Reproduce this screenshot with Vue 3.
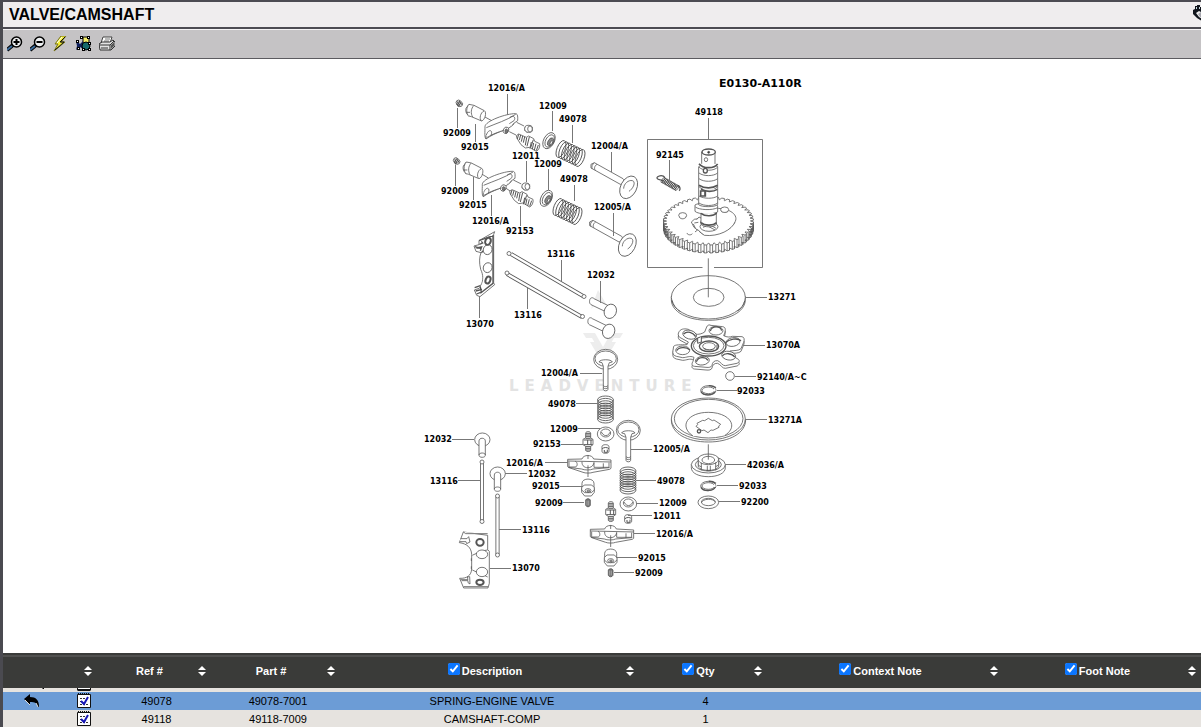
<script setup>
import { ref } from 'vue'

const tools = ['Zoom in', 'Zoom out', 'Hotspots', 'Fit image', 'Print']

const columns = ref([
  { key: 'ref', label: 'Ref #' },
  { key: 'part', label: 'Part #' },
  { key: 'description', label: 'Description', toggle: true, shown: true },
  { key: 'qty', label: 'Qty', toggle: true, shown: true },
  { key: 'context', label: 'Context Note', toggle: true, shown: true },
  { key: 'foot', label: 'Foot Note', toggle: true, shown: true },
])

const rows = [
  { ref: '49078', part: '49078-7001', description: 'SPRING-ENGINE VALVE', qty: '4', context: '', foot: '', selected: true },
  { ref: '49118', part: '49118-7009', description: 'CAMSHAFT-COMP', qty: '1', context: '', foot: '', selected: false },
]

const labels = [
  [488, 88, '12016/A'], [539, 106, '12009'], [559, 119, '49078'], [443, 133, '92009'],
  [461, 147, '92015'], [512, 156, '12011'], [534, 164, '12009'], [560, 179, '49078'],
  [591, 146, '12004/A'], [441, 191, '92009'], [459, 205, '92015'], [594, 207, '12005/A'],
  [472, 221, '12016/A'], [506, 231, '92153'], [547, 254, '13116'], [587, 275, '12032'],
  [514, 315, '13116'], [466, 324, '13070'], [695, 112, '49118'], [656, 155, '92145'],
  [768, 297, '13271'], [766, 345, '13070A'], [757, 377, '92140/A~C'], [737, 391, '92033'],
  [768, 420, '13271A'], [747, 465, '42036/A'], [739, 486, '92033'], [741, 502, '92200'],
  [541, 373, '12004/A'], [548, 404, '49078'], [550, 429, '12009'], [533, 444, '92153'],
  [506, 463, '12016/A'], [424, 439, '12032'], [430, 481, '13116'], [528, 474, '12032'],
  [532, 486, '92015'], [535, 503, '92009'], [522, 530, '13116'], [512, 568, '13070'],
  [653, 449, '12005/A'], [657, 481, '49078'], [659, 503, '12009'], [653, 516, '12011'],
  [656, 534, '12016/A'], [638, 558, '92015'], [635, 573, '92009'],
]

const leaders = [
  'M507.500 94V115', 'M552.500 111V131', 'M572.500 125V143', 'M457.500 108V128', 'M475.500 124V142', 'M526.500 161V182',
  'M548.500 169V190', 'M574.500 185V201', 'M611.500 152V172', 'M455.500 165V186', 'M473.500 177V200', 'M613.500 213V236',
  'M491.500 195V216', 'M520.500 206V226', 'M561.500 260V281', 'M600.500 281V303', 'M527.500 287V309',
  'M479.500 296V318', 'M708.500 118V139', 'M669.500 160V181', 'M745 297.500H767', 'M743 345.500H765',
  'M735 376.500H756', 'M717 390.500H737', 'M745 419.500H767', 'M725 464.500H746', 'M717 485.500H738',
  'M719 501.500H740', 'M580 373.500H602', 'M576 403.500H598', 'M578 428.500H600', 'M561 444.500H583',
  'M545 462.500H568', 'M452 439.500H474', 'M458 480.500H480', 'M505 473.500H527', 'M560 486.500H583',
  'M563 502.500H584', 'M499 529.500H521', 'M490 568.500H511', 'M631 449.500H652', 'M636 480.500H656',
  'M636 503.500H658', 'M628 515.500H652', 'M634 533.500H655', 'M616 557.500H637', 'M614 572.500H634',
].join('')

const lerp = (a, b, t) => a + (b - a) * t

function coils(x1, y1, x2, y2, n, rx, ry, angle) {
  return Array.from({ length: n }, (_, i) => ({
    x: lerp(x1, x2, i / (n - 1)),
    y: lerp(y1, y2, i / (n - 1)),
    rx, ry, angle,
  }))
}

const springs = [
  coils(561, 149, 580, 158, 8, 4, 9, 22),
  coils(558, 207, 577, 216, 8, 4, 9, 22),
  coils(605.5, 419, 605.5, 400, 9, 8, 4, 0),
  coils(628, 490, 628, 471, 9, 8, 4, 0),
  coils(663, 180, 677, 188, 11, 1, 3, 35),
]

const TEETH = 48
function rim(dy) {
  const points = []
  for (let i = 0; i < TEETH; i++) {
    for (const [offset, outer] of [[0, false], [0.3, true], [0.75, true], [0.95, false]]) {
      const a = ((i + offset) / TEETH) * Math.PI * 2
      const rx = outer ? 45 : 42
      const ry = outer ? 24 : 22
      points.push(`${(708.5 + rx * Math.cos(a)).toFixed(1)},${(221 + dy + ry * Math.sin(a)).toFixed(1)}`)
    }
  }
  return points
}
const gearTop = rim(0)
const gearBase = rim(8)
const gearSides = gearTop
  .map((p, i) => (i < TEETH * 2 + 4 && i % 4 !== 0 && i % 4 !== 3 ? `M${p}L${gearBase[i]}` : ''))
  .join('')
</script>

<template>
  <div class="viewer">
    <header class="title-bar">
      <h1>VALVE/CAMSHAFT</h1>
      <button class="hand" type="button" aria-label="Pan">
        <svg viewBox="0 0 16 18" width="16" height="18">
          <path d="M2 2h2V1h3v2h3v3l5 3v8H9L4 14 0 10V6l2-1z" fill="#10151c" />
          <path d="M3 9l3-2 4 2 6 1v6h-5L6 13z" fill="#eee" />
          <path d="M5 10l3-2 5 3v4l-6-2z" fill="#a6a6ad" />
          <path d="M3 3h1v2H3zM6 3h1v2H6z" fill="#c6d6de" />
        </svg>
      </button>
    </header>

    <nav class="toolbar" aria-label="Drawing tools">
      <button v-for="(tool, i) in tools" :key="tool" type="button" :aria-label="tool">
        <svg viewBox="0 0 16 16" width="16" height="16">
          <template v-if="i < 2">
            <path d="M0 14l6-5" stroke="#000" stroke-width="4" />
            <path d="M0 14l5-4" stroke="#3c6c9c" stroke-width="2" />
            <circle cx="9.500" cy="6" r="5" fill="#eef0f2" stroke="#000" stroke-width="1.500" />
            <path d="M6.500 6h6" stroke="#000" stroke-width="2" />
            <path v-if="i === 0" d="M9.500 3v6" stroke="#000" stroke-width="2" />
          </template>
          <template v-else-if="i === 2">
            <path d="M8 0h5L8 6h4L1 15l4-7H2z" fill="#f5ef35" stroke="#77731a" />
            <path d="M12 1L7 6h4L2 14" fill="none" stroke="#111" />
            <path d="M9 1L4 7" stroke="#fff" />
          </template>
          <template v-else-if="i === 3">
            <path d="M7 1h6v8H7z" fill="#f4ee68" stroke="#000" />
            <path d="M0 5l4 3 3-3v8l-3-2-4 3 1-4z" fill="#10205c" />
            <circle cx="10" cy="10" r="4" fill="#17696b" stroke="#000" />
            <path
              d="M4 0h3v3H4zM11 0h3v3h-3zM0 4h3v3H0zM12 6h3v3h-3zM1 11h3v3H1zM6 12h3v3H6zM12 12h3v3h-3z"
              fill="#000"
            />
            <path d="M5 1h1v1H5zM12 1h1v1h-1zM1 5h1v1H1zM13 7h1v1h-1zM2 12h1v1H2zM7 13h1v1H7zM13 13h1v1h-1z" fill="#fff" />
          </template>
          <template v-else>
            <path d="M4 1h9l-2 6H2z" fill="#fff" stroke="#444" />
            <path d="M6 3h5M5 5h5" stroke="#777" />
            <path d="M0 8l3-2h8l3-2 2 2v4l-4 4H1z" fill="#e4e4e4" stroke="#333" />
            <path d="M0 9h11l4-4M11 9v5M2 12h7" fill="none" stroke="#333" />
            <path d="M12 9l3-3v4l-3 3z" fill="#555" />
          </template>
        </svg>
      </button>
    </nav>

    <main class="stage">
      <svg class="drawing" viewBox="382 66 440 580" width="440" height="580" role="img" aria-label="Valve and camshaft parts diagram">
        <defs>
          <g id="nut">
            <path d="M108 100l9-12 15 3 31 16c8 5 2 28-8 31l-31-13c-12-2-19-13-16-25z" />
            <path d="M117 88c-9 10-9 27 0 37M132 91c-10 10-10 25-4 35M155 138c-9-7-3-26 7-30M109 112h11" />
          </g>
          <g id="rocker">
            <path d="M165 155c0-17 66-40 91-39 6 0 8 4 7 21l-13 9c-14 19-52 24-82 46-5-5-3-20-3-37z" />
            <path d="M169 158c30-13 62-22 88-40M169 180c7-20 21-15 14 1l-13 7M239 128c10-9 20-1 13 9l-14 9M183 181c23-13 51-14 70-35M168 192v-11" />
            <ellipse cx="228" cy="166" rx="8" ry="10" transform="rotate(25 228 166)" />
            <ellipse cx="229" cy="168" rx="4" ry="6" fill="#777" />
          </g>
          <g id="stud">
            <path d="M259 182l7-5 23 10 7-4 15 8 3 8 15 7c2 9-3 20-10 23l-20-12-13 2-13-10-12-19z" />
            <path d="M266 178l-4 14M272 180l-4 15M278 183l-4 17M284 186l-4 17M290 188l-4 23M298 186l-7 28M310 194l-8 24M304 201l-4 20M311 204l-4 19M318 206l-5 20M325 210l-6 17" stroke-width="3" />
          </g>
          <g id="collet">
            <path d="M286 154c3-5 19-4 21 2v12c-5 7-18 6-23-2z" />
            <ellipse cx="300" cy="162" rx="7" ry="9" /><path d="M286 155c-6 8 2 16 8 17" />
          </g>
          <g id="retainer">
            <ellipse cx="357" cy="197" rx="16" ry="26" transform="rotate(28 357 197)" />
            <ellipse cx="359" cy="198" rx="12" ry="20" transform="rotate(28 359 198)" />
            <ellipse cx="362" cy="201" rx="8" ry="13" fill="#8a8a8a" transform="rotate(28 362 201)" />
            <ellipse cx="364" cy="203" rx="3" ry="7" transform="rotate(28 364 203)" />
          </g>
          <g id="angled-valve">
            <path d="M483 268l10-5 86 48c6 5 0 17-8 17l-88-49z" />
            <path d="M493 264c-7 4-9 11-6 18M501 268c-8 5-9 13-5 18" />
            <ellipse cx="596" cy="337" rx="24" ry="36" transform="rotate(27 596 337)" />
            <path d="M581 341c0-15 15-27 26-24 12 3 3 24-10 32" />
          </g>
          <g id="upright-valve">
            <ellipse cx="257" cy="58" rx="36" ry="30" />
            <ellipse cx="257" cy="56" rx="32" ry="23" />
            <path d="M237 66l9 2 4 11v69c0 6 14 6 14 0V79l4-11 9-2c-2-9-38-9-40 0zM250 137c4 4 10 4 14 0M250 143c4 4 10 4 14 0" />
          </g>
          <g id="upright-tappet">
            <ellipse cx="202" cy="299" rx="23" ry="20" />
            <path d="M192 346v-43c0-11 19-11 19 0v43c0 8-19 8-19 0zM192 345c0-8 19-8 19 0" />
          </g>
          <g id="upright-retainer">
            <ellipse cx="257" cy="282" rx="25" ry="21" /><ellipse cx="257" cy="279" rx="15" ry="12" />
            <path d="M244 276l5 7c4 5 13 5 17 0l5-7" />
          </g>
          <g id="upright-stud">
            <path d="M197 280c0-7 15-7 15 0v14l7 4v16l-7 5v12c0 5-15 5-15 0v-12l-8-5v-16l8-4z" />
            <path d="M197 280h15M197 285h15M197 290h15M197 295h15M191 300h27M191 314h27M197 320h15M197 325h15M197 330h15M203 300v14M213 300v14" stroke-width="3" />
          </g>
          <g id="upright-collet">
            <path d="M246 320c0-8 21-8 21 0v14c0 8-21 8-21 0z" />
            <path d="M246 327c5-6 17-6 21 0M253 330v7h9v-8" stroke-width="3" />
          </g>
          <g id="upright-rocker">
            <path d="M143 358l43-1c4-14 31-14 35 0l52 3v25l-4 3-50 9c-6 3-24 3-30 0l-42-14-4-3z" />
            <path d="M143 363l130 3M147 365v16h18c9 0 8-15 1-17M186 365c-2 24 34 24 36 2M222 368v14h45v-14M145 382l40 5c8 4 27 4 34 0l50-4M250 370v14" />
            <path d="M204 345v12M204 376v35" />
          </g>
          <g id="upright-nut">
            <path d="M186 452V430c0-17 36-17 36 0v23z" />
            <path d="M185 443l8-8h22l8 8v14l-9 11h-20l-9-11z" />
            <path d="M185 450l9 8h20l9-8" />
            <ellipse cx="204" cy="452" rx="9" ry="6" />
            <ellipse cx="205" cy="453" rx="4" ry="3" fill="#bbb" />
          </g>
          <g id="upright-plug">
            <path d="M197 480c2-5 12-5 14 0v16c-3 6-11 6-14 0z" fill="#777" />
            <path d="M201 482v14M206 482v14" stroke="#fff" stroke-width="1" />
          </g>
        </defs>

        <g class="watermark">
          <path d="M591 309l7-19 11 19-11-7z" />
          <path d="M583 333h12l8 14 8-14h12l-3 5h-6l-11 19-11-19h-6z" />
          <path d="M590 342h5l8 13 8-13h5l-13 22z" />
          <text x="509" y="391">LEADVENTURE</text>
        </g>

        <!-- upper valve train -->
        <g class="ink fine" transform="translate(430 75) scale(.3333)">
          <path d="M163 125l22 12M238 170l20 10M260 142l22 11M155 297l20 12M228 340l14 9M250 315l24 12" />
          <g v-for="(d, i) in ['translate(0 0)', 'translate(-8 173)']" :key="d" :transform="d">
            <ellipse cx="88" cy="85" rx="8" ry="11" transform="rotate(-45 88 85)" />
            <path d="M82 80l8 12M87 78l8 11M80 86l6 9" stroke-width="4" />
            <use href="#nut" /><use href="#rocker" />
            <use href="#stud" :transform="i ? 'translate(-12 -6)' : ''" />
            <use href="#collet" />
            <use href="#retainer" />
          </g>
          <use href="#angled-valve" /><use href="#angled-valve" transform="translate(-4 173)" />
        </g>

        <!-- push rods -->
        <g class="rods">
          <path class="rod-edge" d="M511 254l72 42M507 274l75 43M482 463v57M497.500 497v57" />
          <path class="rod-core" d="M511 254l72 42M507 274l75 43M482 463v57M497.500 497v57" />
        </g>
        <g class="ink">
          <circle v-for="[x, y] in [[509, 253.500], [584, 296.500], [507, 273], [582.500, 316.500], [482, 462], [482, 521.500], [497.500, 496], [497.500, 555]]" :key="`${x}-${y}`" :cx="x" :cy="y" r="2" />
        </g>

        <!-- angled tappets and upper guide plate -->
        <g class="ink fine" transform="translate(430 200) scale(.3333)">
          <g v-for="d in ['translate(0 0)', 'translate(-5 60)']" :key="d" :transform="d">
            <path d="M479 301c1-8 9-10 13-5l43 21-6 19-46-22c-4-3-5-7-4-13z" />
            <ellipse cx="541" cy="334" rx="18" ry="22" transform="rotate(22 541 334)" />
          </g>
          <path d="M147 122l47-27-3 8v146l3 5-44 36-10-4-7-16 17-6 2-8c9-12 8-32 0-48-5-21-4-36 1-50l-15-4-6-16 15-4z" />
          <path d="M147 122l42-15M189 105v145l-38 30M148 133l10-4-4-5M139 144l16-3-4 11M153 146l-18-6M154 158l6-6M134 263l17-6M137 273l19-5M140 282l14-6-3-15" stroke-width="4" />
          <ellipse cx="173" cy="149" rx="13" ry="15" transform="rotate(22 173 149)" />
          <ellipse cx="173" cy="203" rx="13" ry="15" transform="rotate(22 173 203)" />
          <ellipse cx="174" cy="124" rx="8" ry="11" stroke-width="6" transform="rotate(25 174 124)" />
          <ellipse cx="174" cy="240" rx="7" ry="11" stroke-width="6" transform="rotate(22 174 240)" />
        </g>

        <!-- camshaft and gear -->
        <path class="frame" d="M702.500 267.500h-55v-128h115v128H714" />
        <g class="ink">
          <polygon :points="gearBase.join(' ')" />
          <polygon class="blank" :points="gearTop.join(' ')" />
          <path :d="gearSides" />
          <polygon :points="gearTop.join(' ')" />
        </g>
        <g class="ink fine" transform="translate(640 70) scale(.3333)">
          <ellipse cx="128" cy="436" rx="12" ry="8" /><path d="M118 442c7 8 18 4 21-2M141 489c1 7 14 7 16 2" />
          <path d="M163 448l23-4 34-28c43-5 76 16 66 38-10 26-59 46-98 38l-26-20-8-16z" />
          <path d="M160 462l7 14 26 20c44 5 83-17 92-40" />
          <ellipse cx="254" cy="419" rx="12" ry="8" /><path d="M242 422c6 7 19 7 24 0" />
          <ellipse cx="207" cy="470" rx="27" ry="14" /><path d="M189 472l20-8 19 11M192 462l33 18M170 449l7-8 9 5-5 13M163 459l12-2M165 486l9-7 7 8" />
          <path d="M183 424v39c8 10 39 10 46 0v-39z" />
          <path d="M165 405c9-8 67-8 68 3v18c-14 8-58 8-68-2z" /><path d="M166 411c11 9 51 11 67 2" />
          <path d="M176 290v114c8 8 49 8 57 0V290c-9-9-48-9-57 0z" />
          <path d="M185 246v40c5 8 35 8 40 0v-40z" />
          <ellipse cx="206" cy="246" rx="20" ry="9" stroke-width="4" />
          <circle cx="206" cy="247" r="3" fill="#333" />
          <path d="M177 291c10 13 47 13 56 0M177 309c14 11 44 10 56 0M177 326c14 11 44 10 56 0M177 350c14 15 44 14 56 0M177 378c15 9 44 9 56 0M177 399c14 10 44 10 56 0" />
          <path d="M177 281c13 16 45 16 56 1M177 346c18 11 40 10 56 0M183 358c14 8 37 8 49 0M183 430c12 10 37 10 47-1M183 458c12 11 37 9 47 0" stroke-width="5" />
          <ellipse cx="198" cy="269" rx="5" ry="6" /><ellipse cx="196" cy="302" rx="6" ry="7" stroke-width="4" />
          <path d="M182 363h14v15h-14zM195 362v16" stroke-width="5" />
          <path d="M75 323c-8-11-25-4-24 1 1 7 11 4 19 8M114 347c7 2 8 12 3 15" fill="none" stroke-width="4" />
        </g>

        <!-- plates, ball ramp, circlips and washer -->
        <g class="ink fine" transform="translate(650 265) scale(.3333)">
          <path d="M64 94v10c0 37 50 62 111 62s111-25 111-62V94" />
          <ellipse cx="175" cy="97" rx="111" ry="65" /><ellipse cx="176" cy="97" rx="46" ry="27" />
          <path d="M66 106c4 15 12 25 25 34M284 108c-3 13-11 22-21 30" stroke-width="3" />
          <path d="M175 -20V97" />
          <g v-for="d in ['translate(0 8)', 'translate(0 0)']" :key="d" :transform="d">
            <path d="M181 181l37 4c11 2 9 12 3 27 10 5 18 5 26 2l29 1c7 2 8 8 5 17l-8 19c-7 7-21 5-33 7l-6 6 31 19c5 4 3 9-4 12l-35 7c-9 1-13-11-23-15-11-1-16 6-17 14-2 6-9 7-18 6l-35-3c-9-2-8-8-4-15l3-12c-13-6-22 1-34 1l-19-4c-9-2-12-9-10-18l2-12c5-6 20-4 40-5l4-8-26-14c-5-4-6-12-1-18 6-9 19-8 27-6l20 14c10 3 22-1 29-6l6-15c2-5 6-7 11-6z" />
          </g>
          <ellipse v-for="[x, y, a] in [[198, 197, 0], [249, 231, -10], [236, 272, 10], [157, 287, -8], [98, 256, 0], [119, 209, 15]]" :key="x" :cx="x" :cy="y" rx="21" ry="13" :transform="`rotate(${a} ${x} ${y})`" />
          <path d="M181 198c4-17 31-16 34-1M225 234c13-12 37-16 48-7M217 273c7-11 30-8 37 3M139 290c6-15 27-16 35-4M80 257c6-11 29-12 40-2M101 207c10-10 29-5 36 8" fill="none" stroke-width="4" />
          <ellipse cx="176" cy="243" rx="52" ry="30" stroke-width="4" /><ellipse cx="176" cy="242" rx="46" ry="25" />
          <ellipse cx="177" cy="244" rx="29" ry="16" stroke-width="4" /><ellipse cx="177" cy="244" rx="19" ry="11" />
          <path d="M143 222v13l11-4v-16M201 239v15M161 249c9 7 26 8 33-1" stroke-width="3" />
          <circle cx="240" cy="333" r="13" />
        </g>
        <g class="ink fine" transform="translate(650 380) scale(.3333)">
          <g v-for="y in [31, 318]" :key="y">
            <ellipse cx="175" :cy="y" rx="23" ry="14" /><ellipse cx="175" :cy="y" rx="19" ry="10" />
            <path :d="`M153 ${y + 4}c7 13 34 13 43-1M176 ${y - 14}c12-1 16 2 22 6`" fill="none" stroke-width="4" />
            <path :d="`M194 ${y - 5}v8`" stroke="#fff" stroke-width="4" />
          </g>
          <path d="M64 119c0 42 48 67 111 67s112-26 112-67" />
          <ellipse cx="175" cy="117" rx="111" ry="63" /><ellipse cx="176" cy="116" rx="103" ry="58" />
          <path d="M129 168c-44-30-15-71 46-71s94 40 50 69" />
          <path d="M175 115l12 7 5-2 20 13-6 5 1 4-18 9-6-1-9 8-12-8-6 2-18-13 5-5-2-4 17-9 6 1z" />
          <circle cx="147" cy="154" r="5" stroke-width="4" />
          <path d="M124 253v10c0 17 23 27 51 27s51-10 51-27v-10" /><ellipse cx="175" cy="254" rx="51" ry="25" />
          <ellipse cx="175" cy="254" rx="39" ry="19" />
          <path d="M145 239v22c8 13 50 14 61 0v-23z" /><ellipse cx="175" cy="238" rx="31" ry="16" /><ellipse cx="175" cy="240" rx="19" ry="11" />
          <path d="M154 248v23M197 247v24M145 239v17l10 5M206 238v17l-9 5M172 257v16M181 257v16M169 272h15M175 193v46" />
          <ellipse cx="175" cy="367" rx="31" ry="19" /><ellipse cx="175" cy="366" rx="21" ry="11" />
          <path d="M154 369c3-14 38-15 42-2" />
        </g>

        <!-- lower valve train -->
        <g class="ink fine" transform="translate(520 340) scale(.3333)">
          <use href="#upright-valve" /><use href="#upright-valve" transform="translate(68 213)" />
          <g v-for="d in ['translate(0 0)', 'translate(68 210)']" :key="d" :transform="d">
            <use href="#upright-retainer" /><use href="#upright-stud" /><use href="#upright-collet" />
            <use href="#upright-nut" /><use href="#upright-rocker" /><use href="#upright-plug" />
          </g>
        </g>

        <!-- left tappets and lower guide plate -->
        <g class="ink fine" transform="translate(415 340) scale(.3333)">
          <use href="#upright-tappet" /><use href="#upright-tappet" transform="translate(46 102)" />
          <path d="M145 576l73 10v43l5 5v96l-4 14h-73l-12-29c21 1 35-8 36-28v-44c-1-20-14-32-37-35z" />
          <path d="M145 576l7 5h66M137 596h19l5-6 4 16-10 5-2-6h-18M137 719h22l-2-8 7-1 1 22-6-4v-6h-19M146 740h73M218 630c-18 2-27 7-46 16M218 711c-18-10-27-11-46-21M169 655v8M169 679v8" />
          <ellipse cx="201" cy="643" rx="17" ry="13" /><ellipse cx="201" cy="696" rx="17" ry="14" />
          <ellipse cx="195" cy="607" rx="11" ry="10" stroke-width="6" /><ellipse cx="195" cy="727" rx="11" ry="8" stroke-width="6" />
        </g>

        <g v-for="(spring, s) in springs" :key="s" class="spring">
          <ellipse v-for="(c, i) in spring" :key="i" :cx="c.x" :cy="c.y" :rx="c.rx" :ry="c.ry" :transform="`rotate(${c.angle} ${c.x} ${c.y})`" />
        </g>

        <path class="leader" :d="leaders" />
        <text class="drawing-code" x="719" y="87">E0130-A110R</text>
        <text v-for="([x, y, text], i) in labels" :key="i" class="callout" :x="x" :y="y + 3">{{ text }}</text>
      </svg>
    </main>

    <section class="parts">
      <table>
        <colgroup>
          <col class="c-cart" /><col class="c-note" /><col class="c-ref" /><col class="c-part" />
          <col class="c-desc" /><col class="c-qty" /><col class="c-context" /><col class="c-foot" />
        </colgroup>
        <thead>
          <tr>
            <td></td>
            <th scope="col">
              <div class="head">
                <button class="sort" type="button" aria-label="Sort by note">
                  <svg viewBox="0 0 8 10" width="8" height="10"><path d="M4 0l4 4H0zM0 6h8l-4 4z" /></svg>
                </button>
              </div>
            </th>
            <th v-for="col in columns" :key="col.key" scope="col">
              <div class="head">
                <label v-if="col.toggle" class="name">
                  <input v-model="col.shown" type="checkbox" />{{ col.label }}
                </label>
                <span v-else class="name">{{ col.label }}</span>
                <button class="sort" type="button" :aria-label="`Sort by ${col.label}`">
                  <svg viewBox="0 0 8 10" width="8" height="10"><path d="M4 0l4 4H0zM0 6h8l-4 4z" /></svg>
                </button>
              </div>
            </th>
          </tr>
        </thead>
        <tbody>
          <tr class="peek">
            <td>
              <svg class="arrow-tail" viewBox="0 0 16 4" width="16" height="4"><path d="M13 0h2v1h-1z" /></svg>
            </td>
            <td>
              <svg viewBox="0 0 14 4" width="14" height="4"><path d="M0 0h14v2l-1 1H1L0 2z" fill="#111" /><path d="M1 0h12v1H1z" fill="#fff" /></svg>
            </td>
            <td colspan="6"></td>
          </tr>
          <tr v-for="row in rows" :key="row.ref" :class="{ selected: row.selected }">
            <td>
              <button v-if="row.selected" class="cell-icon" type="button" aria-label="Back to drawing">
                <svg viewBox="0 0 16 14" width="16" height="14">
                  <path d="M0 5l6-5v3c6 0 9 3 9 10h-1c-1-4-3-5-8-5v3z" fill="#000" />
                  <path d="M1 6l5 5M14 13l-2-4" stroke="#ddd" />
                </svg>
              </button>
            </td>
            <td>
              <button class="cell-icon" type="button" :aria-label="`Notes for ${row.ref}`">
                <svg viewBox="0 0 14 16" width="14" height="16">
                  <path d="M0.500 1.500h13v13H0.500z" fill="#fff" stroke="#111" />
                  <path d="M1 1h12" stroke="#111" stroke-width="2" stroke-dasharray="1 1" />
                  <path d="M3 5.500h6M3 8.500h3M3 11.500h8" stroke="#333" stroke-dasharray="2 1" />
                  <path d="M4 8l3 3 4-7" fill="none" stroke="#1717b5" stroke-width="2" />
                </svg>
              </button>
            </td>
            <td v-for="col in columns" :key="col.key" class="value">{{ row[col.key] }}</td>
          </tr>
        </tbody>
      </table>
    </section>
  </div>
</template>

<style>
body {
  margin: 0;
}
</style>

<style scoped>
.viewer {
  box-sizing: border-box;
  display: flex;
  flex-direction: column;
  height: 100vh;
  overflow: hidden;
  border-left: 3px solid #4a4a50;
  background: #fff;
  color: #000;
  font-family: "Liberation Sans", Arial, sans-serif;
}

button {
  display: flex;
  padding: 0;
  border: 0;
  background: none;
}

.title-bar {
  display: flex;
  flex: none;
  align-items: center;
  justify-content: space-between;
  box-sizing: border-box;
  height: 29px;
  padding-left: 6px;
  overflow: hidden;
  border-top: 2px solid #4c4b52;
  border-bottom: 2px solid #4c4b52;
  background: #efedee;
}

.title-bar h1 {
  margin: 0;
  font-size: 16px;
  line-height: 24px;
}

.hand {
  margin: 0 -8px 4px 0;
}

.toolbar {
  display: flex;
  flex: none;
  align-items: center;
  gap: 7px;
  box-sizing: border-box;
  height: 30px;
  padding-left: 4px;
  border-top: 1px solid #f4f3f4;
  border-bottom: 1px solid #5c5b60;
  background: #c5c3c5;
}

.stage {
  display: flex;
  flex: 1;
  align-items: center;
  justify-content: center;
  min-height: 0;
}

.watermark {
  fill: #ededed;
}

.watermark text {
  fill: #e3e3e3;
  font: bold 15px "DejaVu Sans", sans-serif;
  letter-spacing: 6px;
}

.ink,
.spring,
.frame {
  fill: #fff;
  stroke: #555;
  stroke-width: 0.8;
}

.fine {
  stroke-width: 2.4;
}

.blank {
  stroke: none;
}

.frame,
.leader,
.rod-edge,
.rod-core {
  fill: none;
}

.leader {
  stroke: #777;
  stroke-width: 1;
}

.spring {
  fill: none;
  stroke: #444;
}

.rod-edge {
  stroke: #555;
  stroke-width: 4;
}

.rod-core {
  stroke: #fff;
  stroke-width: 2.4;
}

.callout {
  font: bold 8px "DejaVu Sans", sans-serif;
}

.drawing-code {
  font: bold 11px "DejaVu Sans", sans-serif;
}

.parts {
  flex: none;
  height: 74px;
  overflow: hidden;
  background: #e6e3df;
}

table {
  width: 100%;
  border-collapse: collapse;
  table-layout: fixed;
  font-size: 11px;
  line-height: 18px;
}

.c-cart { width: 68px; }
.c-note { width: 26px; }
.c-ref { width: 114px; }
.c-part { width: 129px; }
.c-desc { width: 299px; }
.c-qty { width: 128px; }
.c-context { width: 236px; }
.c-foot { width: 198px; }

td,
th {
  padding: 0;
}

thead {
  background: linear-gradient(#3a3b39 2px, #50504f 2px, #50504f 4px, #3a3b39 4px);
  color: #fff;
}

thead tr {
  height: 35px;
}

.head {
  display: flex;
  align-items: center;
  height: 31px;
  padding: 2px 5px 2px 0;
}

.name {
  display: flex;
  flex: 1;
  align-items: center;
  justify-content: center;
  gap: 2px;
  padding-left: 4px;
}

.name input {
  width: 12px;
  height: 12px;
  margin: 0 0 4px;
  accent-color: #0b76ff;
}

.sort {
  margin-left: auto;
  fill: #fff;
}

.peek td {
  height: 4px;
  line-height: 0;
}

.peek svg,
.cell-icon {
  display: flex;
  margin: 0 auto;
}

.arrow-tail,
td:first-child .cell-icon {
  margin-left: 21px;
}

tbody tr:not(.peek) {
  height: 18px;
}

.selected {
  background: #6c9cd6;
}

.value {
  padding-left: 5px;
  text-align: center;
}
</style>
